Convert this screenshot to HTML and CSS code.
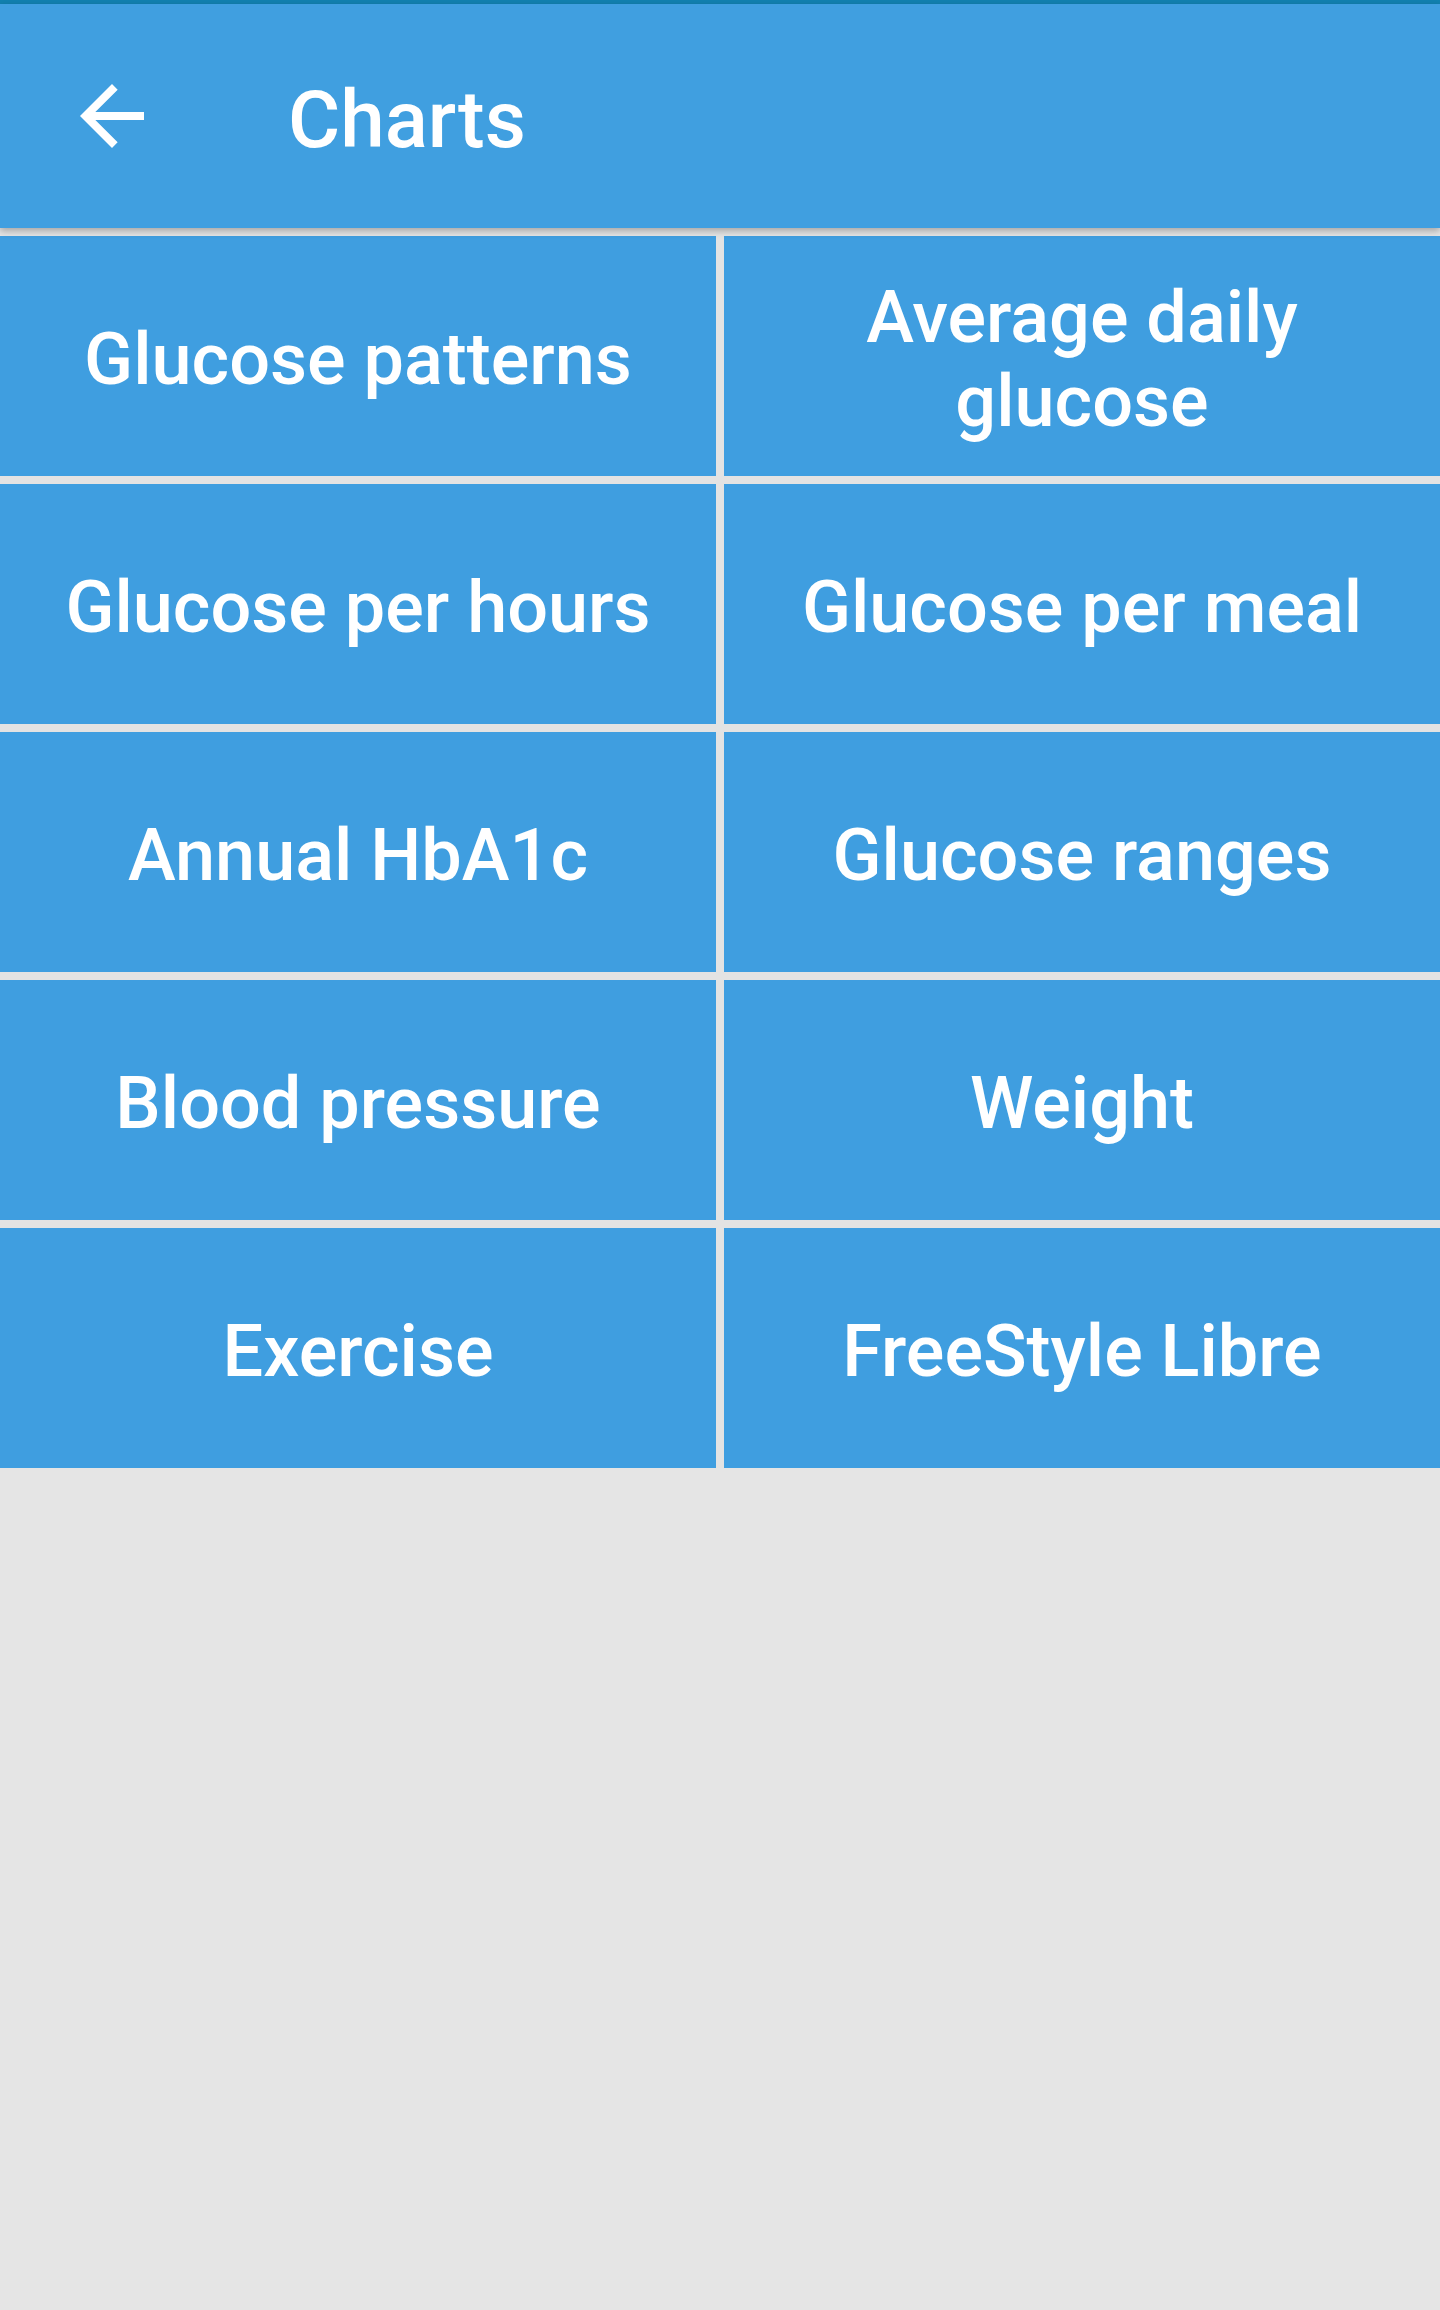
FILE: index.html
```html
<!DOCTYPE html>
<html lang="en">
<head>
<meta charset="utf-8">
<title>Charts</title>
<link rel="stylesheet" href="styles.css">
</head>
<body>
<div class="status"></div>
<header class="toolbar">
  <div class="nav-btn">
    <svg width="96" height="96" viewBox="0 0 24 24" aria-hidden="true"><path fill="#fff" d="M20 11H7.83l5.59-5.59L12 4l-8 8 8 8 1.41-1.41L7.83 13H20v-2z"/></svg>
  </div>
  <h1 class="title">Charts</h1>
</header>
<main class="grid">
  <div class="tile">Glucose patterns</div>
  <div class="tile">Average daily glucose</div>
  <div class="tile">Glucose per hours</div>
  <div class="tile">Glucose per meal</div>
  <div class="tile">Annual HbA1c</div>
  <div class="tile">Glucose ranges</div>
  <div class="tile">Blood pressure</div>
  <div class="tile">Weight</div>
  <div class="tile">Exercise</div>
  <div class="tile">FreeStyle Libre</div>
</main>
</body>
</html>
```
FILE: styles.css
```css
html, body {
  margin: 0;
  padding: 0;
}
body {
  background: #e5e5e5;
  font-family: Roboto, "Liberation Sans", sans-serif;
  min-height: 2310px;
}
.status {
  height: 4px;
  background: #1281b0;
}
.toolbar {
  position: relative;
  z-index: 2;
  height: 224px;
  background: #409fe0;
  display: flex;
  align-items: center;
  box-shadow: 0 3px 7px rgba(0, 0, 0, 0.28);
}
.nav-btn {
  width: 96px;
  height: 96px;
  margin-left: 64px;
  display: flex;
}
.title {
  margin: 8px 0 0 128px;
  color: #fff;
  font-size: 80px;
  font-weight: 500;
  line-height: 1;
}
.grid {
  margin-top: 8px;
  display: grid;
  grid-template-columns: 716px 716px;
  grid-auto-rows: 240px;
  gap: 8px;
  background: #e3e3e3;
}
.tile {
  background: #3f9ee0;
  color: #fff;
  font-size: 72px;
  font-weight: 500;
  line-height: 84px;
  display: flex;
  align-items: center;
  justify-content: center;
  text-align: center;
  padding: 8px 32px 0;
}
```
